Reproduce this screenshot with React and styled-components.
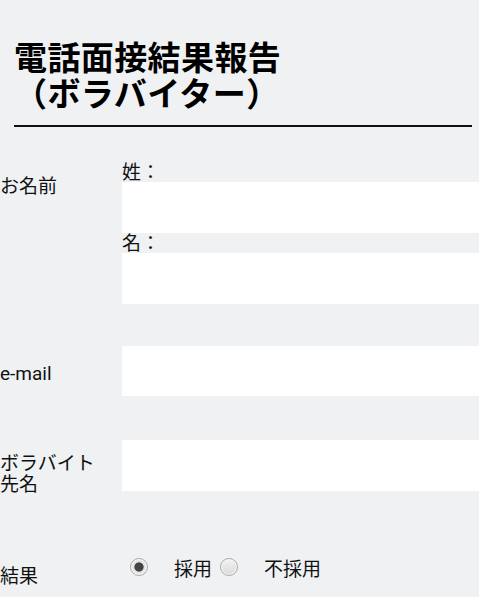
import React from 'react'
import styled, { createGlobalStyle } from 'styled-components'

const GlobalStyle = createGlobalStyle`
  html, body {
    margin: 0;
    padding: 0;
    background: #f0f1f3;
    overflow: hidden;
  }
  body {
    font-family: "Roboto", "Noto Sans CJK JP", sans-serif;
    color: #111;
  }
`

const Page = styled.div`
  width: 479px;
  min-height: 597px;
  overflow: hidden;
  background: #f0f1f3;
`

const Header = styled.header`
  padding: 41px 7px 0 14px;
`

const Title = styled.h1`
  margin: 0;
  font-size: 33px;
  line-height: 36px;
  letter-spacing: 0.4px;
  font-weight: 700;
  color: #000;
`

const Rule = styled.hr`
  margin: 12px 0 0;
  border: 0;
  height: 2px;
  background: #111;
`

const Field = styled.div`
  display: grid;
  grid-template-columns: 122px 380px;
  align-items: start;
  margin-top: ${p => p.$top}px;
`

const FieldLabel = styled.label`
  font-size: 19px;
  line-height: 21px;
  padding-top: ${p => p.$pad}px;
  color: #111;
`

const SubLabel = styled.div`
  font-size: 19px;
  line-height: 18px;
  padding-top: 2px;
  color: #111;
`

const TextInput = styled.input`
  display: block;
  box-sizing: border-box;
  width: 100%;
  height: ${p => p.$h || 51}px;
  margin: 0;
  border: 0;
  padding: 0 10px;
  background: #fff;
  font: inherit;
  outline: none;
`

const RadioGroup = styled.div`
  display: flex;
  align-items: flex-start;
`

const Option = styled.label`
  display: flex;
  align-items: flex-start;
`

const Radio = styled.input.attrs({ type: 'radio' })`
  appearance: none;
  -webkit-appearance: none;
  box-sizing: border-box;
  width: 18px;
  height: 18px;
  margin: 1px 0 0 8px;
  border-radius: 50%;
  border: 1px solid #a9a9a9;
  background: linear-gradient(#f2f2f2, #dadada);
  box-shadow: inset 0 0 0 1px #fafafa;

  &:checked {
    background: radial-gradient(circle, #444 0 4.2px, #e2e2e2 5px, #e6e6e6 7px, #f4f4f4 8px);
  }
`

const OptionText = styled.span`
  margin-left: 26px;
  padding-top: 3px;
  font-size: 19px;
  line-height: 20px;
  color: #111;
`

export default function App() {
  return (
    <Page>
      <GlobalStyle />
      <Header>
        <Title>電話面接結果報告<br />（ボラバイター）</Title>
        <Rule />
      </Header>

      <Field $top={35}>
        <FieldLabel $pad={14}>お名前</FieldLabel>
        <div>
          <SubLabel>姓：</SubLabel>
          <TextInput type="text" />
          <SubLabel>名：</SubLabel>
          <TextInput type="text" />
        </div>
      </Field>

      <Field $top={42}>
        <FieldLabel $pad={17}>e-mail</FieldLabel>
        <TextInput type="email" $h={50} />
      </Field>

      <Field $top={44}>
        <FieldLabel $pad={13}>ボラバイト<br />先名</FieldLabel>
        <TextInput type="text" />
      </Field>

      <Field $top={62}>
        <FieldLabel $pad={9}>結果</FieldLabel>
        <RadioGroup>
          <Option>
            <Radio name="result" defaultChecked />
            <OptionText>採用</OptionText>
          </Option>
          <Option>
            <Radio name="result" />
            <OptionText>不採用</OptionText>
          </Option>
        </RadioGroup>
      </Field>
    </Page>
  )
}
